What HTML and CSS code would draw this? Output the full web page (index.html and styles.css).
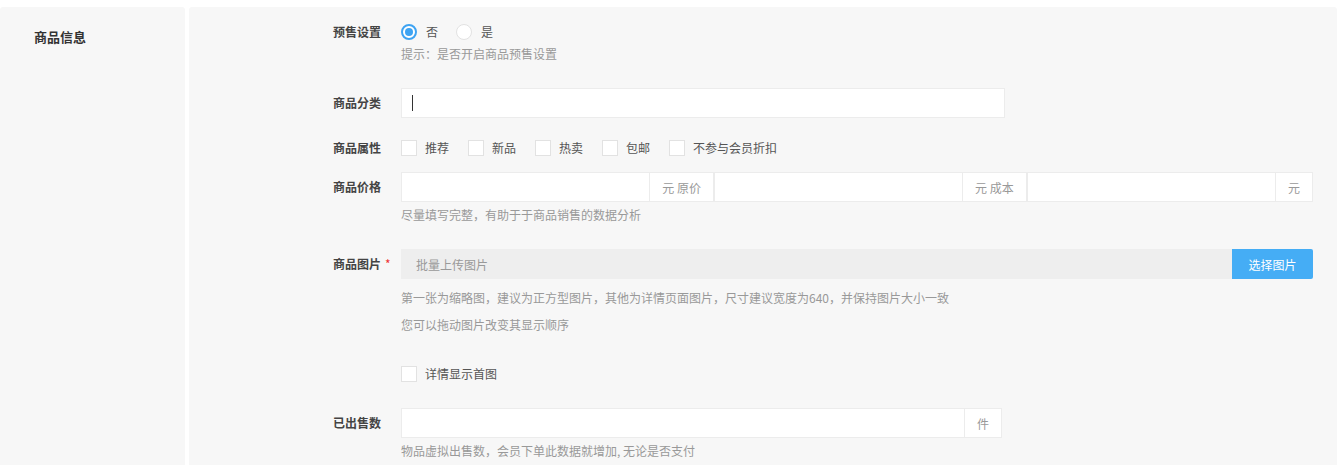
FILE: index.html
```html
<!DOCTYPE html>
<html lang="zh-CN">
<head>
    <meta charset="UTF-8">
    <title>商品信息</title>
    <link rel="stylesheet" href="styles.css">
</head>
<body>
    <div class="page">
        <div class="side-panel">
            <h3 class="side-title">商品信息</h3>
        </div>

        <div class="main-panel">
            <div class="form-row">
                <label class="form-label line">预售设置</label>
                <div class="form-control">
                    <div class="choice-line">
                        <span class="choice"><span class="radio checked"></span>否</span>
                        <span class="choice"><span class="radio"></span>是</span>
                    </div>
                    <p class="help">提示：是否开启商品预售设置</p>
                </div>
            </div>

            <div class="form-row gap-24">
                <label class="form-label">商品分类</label>
                <div class="form-control narrow">
                    <div class="field">
                        <input type="text" class="text-input">
                        <span class="caret"></span>
                    </div>
                </div>
            </div>

            <div class="form-row gap-20">
                <label class="form-label line">商品属性</label>
                <div class="form-control">
                    <div class="choice-line">
                        <span class="choice wide"><span class="checkbox"></span>推荐</span>
                        <span class="choice wide"><span class="checkbox"></span>新品</span>
                        <span class="choice wide"><span class="checkbox"></span>热卖</span>
                        <span class="choice wide"><span class="checkbox"></span>包邮</span>
                        <span class="choice wide"><span class="checkbox"></span>不参与会员折扣</span>
                    </div>
                </div>
            </div>

            <div class="form-row gap-14">
                <label class="form-label">商品价格</label>
                <div class="form-control">
                    <div class="input-group">
                        <input type="text" class="text-input">
                        <span class="addon">元 原价</span>
                        <input type="text" class="text-input">
                        <span class="addon">元 成本</span>
                        <input type="text" class="text-input">
                        <span class="addon">元</span>
                    </div>
                    <p class="help tight">尽量填写完整，有助于于商品销售的数据分析</p>
                </div>
            </div>

            <div class="form-row gap-24">
                <label class="form-label">商品图片<span class="required">*</span></label>
                <div class="form-control">
                    <div class="input-group">
                        <input type="text" class="text-input upload" placeholder="批量上传图片" readonly>
                        <button class="pick-button">选择图片</button>
                    </div>
                    <p class="help tall first">第一张为缩略图，建议为正方型图片，其他为详情页面图片，尺寸建议宽度为640，并保持图片大小一致</p>
                    <p class="help tall">您可以拖动图片改变其显示顺序</p>
                </div>
            </div>

            <div class="form-row gap-26">
                <label class="form-label line"></label>
                <div class="form-control">
                    <div class="choice-line">
                        <span class="choice"><span class="checkbox"></span>详情显示首图</span>
                    </div>
                </div>
            </div>

            <div class="form-row gap-24">
                <label class="form-label">已出售数</label>
                <div class="form-control sold">
                    <div class="input-group">
                        <input type="text" class="text-input">
                        <span class="addon">件</span>
                    </div>
                    <p class="help tight">物品虚拟出售数，会员下单此数据就增加, 无论是否支付</p>
                </div>
            </div>
        </div>
    </div>
</body>
</html>
```

FILE: styles.css
```css
* {
    margin: 0;
    padding: 0;
    box-sizing: border-box;
}

body {
    background: #fff;
    font-family: "Microsoft YaHei", "Noto Sans CJK SC", sans-serif;
    font-size: 12px;
    color: #333;
}

.page {
    display: flex;
    gap: 4px;
    padding-top: 7px;
    min-height: 520px;
}

.side-panel {
    width: 185px;
    background: #f7f7f7;
    border-radius: 3px;
    padding: 20px 0 0 34px;
}

.side-title {
    font-size: 13px;
    font-weight: bold;
    line-height: 20px;
    color: #333;
}

.main-panel {
    flex: 1;
    background: #f7f7f7;
    border-radius: 3px;
    padding: 15px 24px 40px 0;
}

.form-row {
    display: flex;
    align-items: flex-start;
}

.gap-14 { margin-top: 14px; }
.gap-20 { margin-top: 20px; }
.gap-24 { margin-top: 24px; }
.gap-26 { margin-top: 26px; }

.form-label {
    width: 212px;
    flex-shrink: 0;
    padding-right: 20px;
    text-align: right;
    font-weight: bold;
    color: #444;
    line-height: 30px;
    height: 30px;
    white-space: nowrap;
}

.form-label.line {
    line-height: 20px;
    height: 20px;
}

.required {
    display: inline-block;
    width: 0;
    text-indent: 4px;
    color: #e33;
    font-weight: normal;
}

.form-control {
    flex: 1;
}

.form-control.narrow {
    flex: 0 0 604px;
}

.form-control.sold {
    flex: 0 0 601px;
}

.choice-line {
    display: flex;
    align-items: center;
    height: 20px;
}

.choice {
    display: flex;
    align-items: center;
    margin-right: 18px;
    color: #555;
    line-height: 20px;
}

.choice.wide {
    margin-right: 19px;
}

.radio {
    width: 16px;
    height: 16px;
    border-radius: 50%;
    border: 1px solid #e2e2e2;
    background: #fff;
    margin-right: 9px;
    position: relative;
}

.radio.checked {
    border: 2px solid #3ea3f2;
}

.radio.checked::after {
    content: "";
    position: absolute;
    left: 2px;
    top: 2px;
    width: 8px;
    height: 8px;
    border-radius: 50%;
    background: #3ea3f2;
}

.checkbox {
    width: 16px;
    height: 16px;
    border: 1px solid #e2e2e2;
    background: #fff;
    margin-right: 8px;
}

.field {
    position: relative;
}

.caret {
    position: absolute;
    left: 11px;
    top: 7px;
    width: 1px;
    height: 16px;
    background: #333;
}

.text-input {
    display: block;
    width: 100%;
    height: 30px;
    border: 1px solid #ececec;
    background: #fff;
    padding: 0 12px;
    font-family: inherit;
    font-size: 12px;
    color: #333;
    outline: none;
}

.input-group {
    display: flex;
    height: 30px;
}

.input-group .text-input {
    flex: 1;
    min-width: 0;
}

.addon {
    display: flex;
    align-items: center;
    padding: 0 12px;
    border: 1px solid #ececec;
    border-left: none;
    background: #fff;
    color: #999;
    white-space: nowrap;
}

.text-input.upload {
    background: #eee;
    border-color: #eee;
    padding-left: 14px;
}

.text-input.upload::placeholder {
    color: #999;
}

.pick-button {
    width: 81px;
    border: none;
    border-radius: 0 2px 2px 0;
    background: #45adf5;
    color: #fff;
    font-family: inherit;
    font-size: 12px;
    cursor: pointer;
}

.help {
    color: #999;
    line-height: 20px;
    margin-top: 2px;
}

.help.tight {
    margin-top: 3px;
}

.help.tall {
    line-height: 27px;
    margin-top: 0;
}

.help.tall.first {
    margin-top: 5px;
}
```
